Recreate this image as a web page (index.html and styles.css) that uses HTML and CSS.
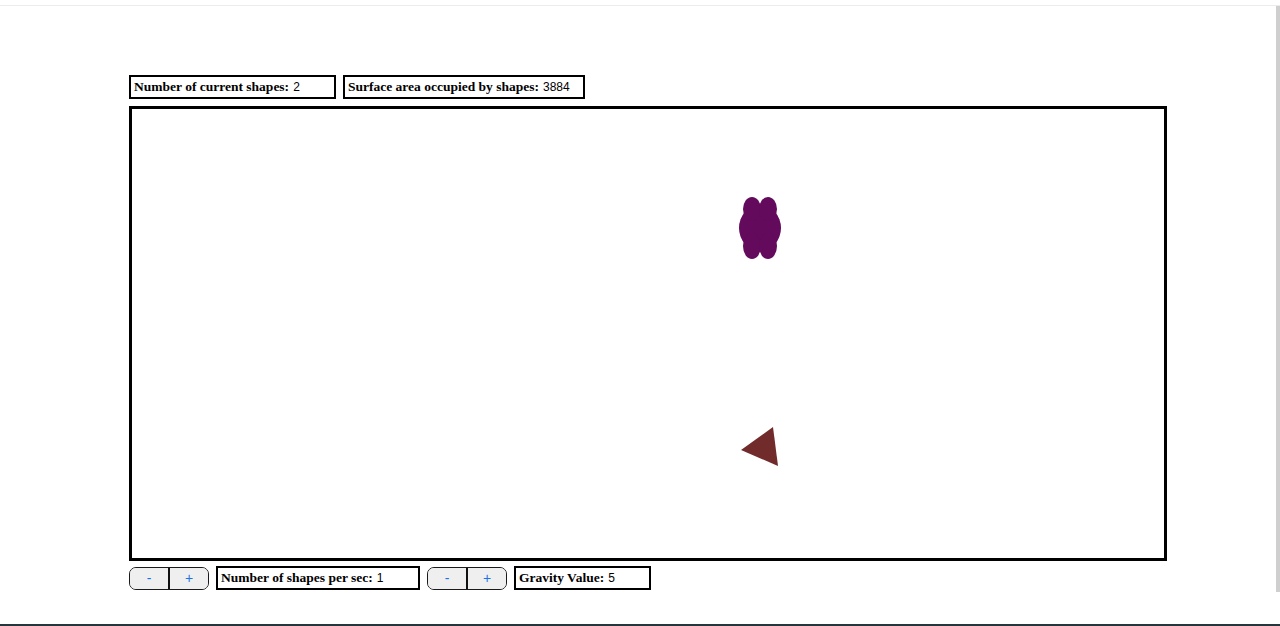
FILE: index.html
```html
<!DOCTYPE html>
<html>
<head>
<meta charset="utf-8">
<link rel="stylesheet" href="styles.css">
</head>
<body>
<div class="topline"></div>
<div class="scrollbar"></div>
<main class="app">
  <div class="row top-row">
    <div class="stat stat-count"><b>Number of current shapes:</b> <span class="val">2</span></div>
    <div class="stat stat-area"><b>Surface area occupied by shapes:</b> <span class="val">3884</span></div>
  </div>
  <div class="canvas">
    <svg class="shapes" width="1031" height="448" viewBox="0 0 1031 448">
      <g fill="#630a5c">
        <ellipse cx="628" cy="119" rx="21" ry="23"/>
        <ellipse cx="620" cy="100" rx="9" ry="12"/>
        <ellipse cx="636" cy="100" rx="9" ry="12"/>
        <ellipse cx="620" cy="137" rx="9" ry="13"/>
        <ellipse cx="636" cy="137" rx="9" ry="13"/>
      </g>
      <polygon fill="#722b2b" points="609,341 641,318 646,357"/>
    </svg>
  </div>
  <div class="row bottom-row">
    <div class="btn-group"><button class="btn">-</button><button class="btn">+</button></div>
    <div class="stat stat-rate"><b>Number of shapes per sec:</b> <span class="val">1</span></div>
    <div class="btn-group"><button class="btn">-</button><button class="btn">+</button></div>
    <div class="stat stat-gravity"><b>Gravity Value:</b> <span class="val">5</span></div>
  </div>
</main>
<div class="bottombar"></div>
</body>
</html>
```
FILE: styles.css
```css
html, body {
  margin: 0;
  padding: 0;
  background: #fff;
  height: 626px;
  overflow: hidden;
}
body {
  position: relative;
  font-family: "Liberation Serif", serif;
}
.topline {
  height: 5px;
  border-bottom: 1px solid #ececec;
}
.scrollbar {
  position: absolute;
  right: 0;
  top: 6px;
  width: 4px;
  height: 586px;
  background: #cfcfcf;
}
.bottombar {
  position: absolute;
  left: 0;
  bottom: 0;
  width: 1280px;
  height: 2px;
  background: #26343c;
}
.app {
  padding: 69px 0 0 129px;
}
.row {
  display: flex;
  gap: 7px;
}
.stat {
  box-sizing: border-box;
  height: 24px;
  border: 2px solid #000;
  padding: 0 0 0 3px;
  display: flex;
  align-items: center;
  gap: 4px;
  font-size: 13.5px;
  color: #000;
  white-space: nowrap;
}
.stat b { font-weight: bold; }
.val {
  font-family: "Liberation Sans", Arial, sans-serif;
  font-size: 12px;
}
.stat-count { width: 207px; }
.stat-area { width: 242px; }
.stat-rate { width: 204px; }
.stat-gravity { width: 137px; }
.canvas {
  box-sizing: border-box;
  width: 1038px;
  height: 455px;
  border: 3px solid #000;
  margin-top: 7px;
}
.shapes { display: block; }
.bottom-row {
  margin-top: 5px;
  align-items: center;
}
.btn-group {
  box-sizing: border-box;
  width: 80px;
  height: 23px;
  display: flex;
  border: 1.5px solid #1a1a1a;
  border-radius: 7px;
  overflow: hidden;
  background: #efefef;
}
.btn {
  flex: 1;
  margin: 0;
  padding: 0;
  border: 0;
  background: #efefef;
  color: #1a73e8;
  font-family: "Liberation Sans", Arial, sans-serif;
  font-size: 14px;
  line-height: 20px;
}
.btn + .btn {
  border-left: 2px solid #111;
}
```
